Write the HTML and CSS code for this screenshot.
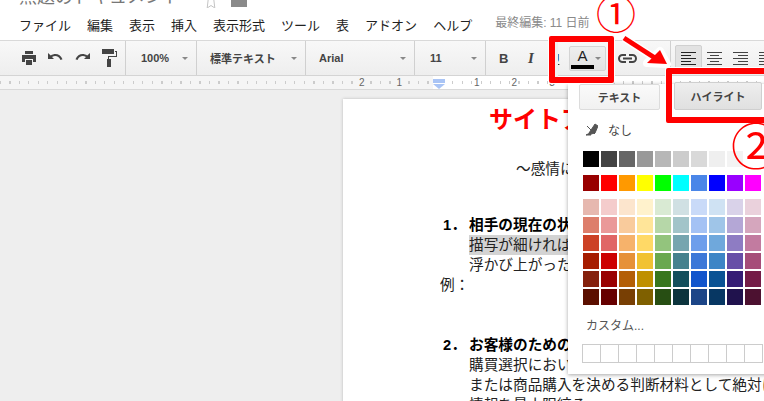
FILE: index.html
```html
<!DOCTYPE html>
<html lang="ja">
    <head>
        <meta charset="UTF-8">
        <meta name="viewport" content="width=device-width, initial-scale=1.0">
        <title>無題のドキュメント</title>
        <link rel="stylesheet" href="styles.css">
    </head>
    <body>
        <div class="header">
            <div class="title-row">
                <span class="doc-title">無題のドキュメント</span>
                <svg class="star" width="12" height="8" viewBox="0 0 12 8"><path d="M3.500 -3 L2.200 8 L6 5.500 L9.800 8 L8.500 -3" fill="none" stroke="#c4c4c4"/></svg>
                <span class="folder"></span>
            </div>
            <div class="menu-row">
                <span class="menu-item">ファイル</span>
                <span class="menu-item">編集</span>
                <span class="menu-item">表示</span>
                <span class="menu-item">挿入</span>
                <span class="menu-item">表示形式</span>
                <span class="menu-item">ツール</span>
                <span class="menu-item">表</span>
                <span class="menu-item">アドオン</span>
                <span class="menu-item">ヘルプ</span>
                <span class="last-edit">最終編集: 11 日前</span>
            </div>
        </div>

        <div class="toolbar">
            <div class="group group-icons">
                <svg width="14" height="14" viewBox="0 0 14 14"><path d="M3 0h8v3H3z M0 4h14v7h-3V8H3v3H0z M4 9h6v5H4z" fill="#444"/></svg>
                <svg width="15" height="14" viewBox="0 0 15 14"><path d="M0 2v6h6L4 6c3-2 7-1 8.500 3l2-.7C12.500 3 7 1.500 2.800 4.500z" fill="#444"/></svg>
                <svg width="15" height="14" viewBox="0 0 15 14"><path d="M15 2v6H9l2-2C8 4 4 5 2.500 9l-2-.7C2.500 3 8 1.500 12.200 4.500z" fill="#444"/></svg>
                <svg width="15" height="18" viewBox="0 0 15 18"><path d="M0 0h12v5H0z M13 2h2v6H7v2h2v8H5v-8h1V7h8V3h-1z" fill="#444"/></svg>
            </div>
            <div class="group group-zoom"><span class="label">100%</span><span class="caret"></span></div>
            <div class="group group-style"><span class="label">標準テキスト</span><span class="caret"></span></div>
            <div class="group group-font"><span class="label">Arial</span><span class="caret"></span></div>
            <div class="group group-size"><span class="label">11</span><span class="caret"></span></div>
            <div class="group group-format">
                <span class="fmt fmt-b">B</span>
                <span class="fmt fmt-i">I</span>
                <span class="fmt fmt-u">U</span>
                <div class="color-btn">
                    <span class="color-letter">A</span>
                    <span class="caret"></span>
                </div>
                <svg class="link-icon" width="19" height="9" viewBox="0 0 19 9"><path d="M8 1H4.500a3.500 3.500 0 0 0 0 7H8 M11 1h3.500a3.500 3.500 0 0 1 0 7H11 M5 4.500h9" fill="none" stroke="#444" stroke-width="2"/></svg>
            </div>
            <div class="group group-align">
                <span class="align-btn active"><svg width="15" height="13" viewBox="0 0 15 13"><path d="M0 .5h15M0 3.500h10M0 6.500h15M0 9.500h10M0 12.500h15" stroke="#222"/></svg></span>
                <span class="align-btn"><svg width="15" height="13" viewBox="0 0 15 13"><path d="M0 .5h15M3 3.500h9M0 6.500h15M3 9.500h9M0 12.500h15" stroke="#444"/></svg></span>
                <span class="align-btn"><svg width="15" height="13" viewBox="0 0 15 13"><path d="M0 .5h15M5 3.500h10M0 6.500h15M5 9.500h10M0 12.500h15" stroke="#444"/></svg></span>
                <span class="align-btn"><svg width="15" height="13" viewBox="0 0 15 13"><path d="M0 .5h15M0 3.500h15M0 6.500h15M0 9.500h15M0 12.500h15" stroke="#444"/></svg></span>
            </div>
        </div>

        <div class="ruler">
            <div class="ruler-margin">
                <span class="tick-num">2</span>
                <span class="tick-num">1</span>
            </div>
            <div class="ruler-page">
                <span class="indent"></span>
                <span class="tick-num">1</span>
                <span class="tick-num">2</span>
                <span class="tick-num">3</span>
            </div>
        </div>

        <div class="canvas">
            <div class="paper">
                <h1 class="doc-heading">サイトアフィリエイト</h1>
                <p class="doc-sub">〜感情に訴える文章術〜</p>

                <div class="item item-first">
                    <span class="num">1．</span>
                    <div class="item-body">
                        <p class="item-head">相手の現在の状況を描写する</p>
                        <p><span class="hl">描写が細ければ細かいほど</span></p>
                        <p>浮かび上がった悩みに共感します</p>
                    </div>
                </div>
                <p class="example">例：</p>

                <div class="item item-second">
                    <span class="num">2．</span>
                    <div class="item-body">
                        <p class="item-head">お客様のための情報を提供する</p>
                        <p>購買選択において必要な情報を</p>
                        <p>または商品購入を決める判断材料として絶対に</p>
                        <p>情報を最小限絞る</p>
                    </div>
                </div>
            </div>
        </div>

        <div class="color-menu">
            <div class="tabs">
                <span class="tab">テキスト</span>
                <span class="tab tab-on">ハイライト</span>
            </div>
            <div class="none-row">
                <svg width="12" height="13" viewBox="0 0 12 13"><path d="M3 10 L9 1 L12 3 L9 10 L5 11 Z M0 12 L4 10 L5 12 Z M1 3 L9 11" fill="#555" stroke="#555"/></svg>
                <span>なし</span>
            </div>
            <div class="swatches row-gray">
                <i style="background:#000000"></i><i style="background:#434343"></i><i style="background:#666666"></i><i style="background:#999999"></i><i style="background:#b7b7b7"></i><i style="background:#cccccc"></i><i style="background:#d9d9d9"></i><i style="background:#efefef"></i><i style="background:#f3f3f3"></i><i style="background:#ffffff"></i>
            </div>
            <div class="swatches row-bright">
                <i style="background:#980000"></i><i style="background:#ff0000"></i><i style="background:#ff9900"></i><i style="background:#ffff00"></i><i style="background:#00ff00"></i><i style="background:#00ffff"></i><i style="background:#4a86e8"></i><i style="background:#0000ff"></i><i style="background:#9900ff"></i><i style="background:#ff00ff"></i>
            </div>
            <div class="swatches row-shades">
                <i style="background:#e6b8af"></i><i style="background:#f4cccc"></i><i style="background:#fce5cd"></i><i style="background:#fff2cc"></i><i style="background:#d9ead3"></i><i style="background:#d0e0e3"></i><i style="background:#c9daf8"></i><i style="background:#cfe2f3"></i><i style="background:#d9d2e9"></i><i style="background:#ead1dc"></i>
                <i style="background:#dd7e6b"></i><i style="background:#ea9999"></i><i style="background:#f9cb9c"></i><i style="background:#ffe599"></i><i style="background:#b6d7a8"></i><i style="background:#a2c4c9"></i><i style="background:#a4c2f4"></i><i style="background:#9fc5e8"></i><i style="background:#b4a7d6"></i><i style="background:#d5a6bd"></i>
                <i style="background:#cc4125"></i><i style="background:#e06666"></i><i style="background:#f6b26b"></i><i style="background:#ffd966"></i><i style="background:#93c47d"></i><i style="background:#76a5af"></i><i style="background:#6d9eeb"></i><i style="background:#6fa8dc"></i><i style="background:#8e7cc3"></i><i style="background:#c27ba0"></i>
                <i style="background:#a61c00"></i><i style="background:#cc0000"></i><i style="background:#e69138"></i><i style="background:#f1c232"></i><i style="background:#6aa84f"></i><i style="background:#45818e"></i><i style="background:#3c78d8"></i><i style="background:#3d85c6"></i><i style="background:#674ea7"></i><i style="background:#a64d79"></i>
                <i style="background:#85200c"></i><i style="background:#990000"></i><i style="background:#b45f06"></i><i style="background:#bf9000"></i><i style="background:#38761d"></i><i style="background:#134f5c"></i><i style="background:#1155cc"></i><i style="background:#0b5394"></i><i style="background:#351c75"></i><i style="background:#741b47"></i>
                <i style="background:#5b0f00"></i><i style="background:#660000"></i><i style="background:#783f04"></i><i style="background:#7f6000"></i><i style="background:#274e13"></i><i style="background:#0c343d"></i><i style="background:#1c4587"></i><i style="background:#073763"></i><i style="background:#20124d"></i><i style="background:#4c1130"></i>
            </div>
            <div class="custom-label">カスタム...</div>
            <div class="custom-row">
                <i></i><i></i><i></i><i></i><i></i><i></i><i></i><i></i><i></i><i></i>
            </div>
        </div>

        <!-- red annotations drawn on top of the screenshot -->
        <div class="mark mark-color"></div>
        <div class="mark mark-tab"></div>
        <svg class="arrow" width="52" height="36" viewBox="0 0 52 36">
            <path d="M3 3 L32 22 M39 16 L46 29 L26 28 Z" fill="#fff" stroke="#fff" stroke-width="8" stroke-linejoin="round"/>
            <path d="M3 3 L34 23" stroke="#f00" stroke-width="5"/>
            <path d="M39 15 L46 29 L26 28 Z" fill="#f00"/>
        </svg>
        <span class="circled circled-one">①</span>
        <span class="circled circled-two">②</span>
    </body>
</html>
```

FILE: styles.css
```css
*{
    box-sizing: border-box;
    font-family: "Liberation Sans", "Noto Sans CJK JP", sans-serif;
}

html, body{
    margin: 0;
    height: 401px;
    overflow: hidden;
    background-color: white;
}

p, h1{
    margin: 0;
}

.header{
    height: 40px;
    padding-left: 19px;
    overflow: hidden;
}

.title-row{
    height: 8px;
    display: flex;
    align-items: flex-end;
}

.doc-title{
    font-size: 18px;
    line-height: 22px;
    color: #777;
    width: 186px;
    flex: none;
}

.star{
    flex: none;
}

.folder{
    width: 16px;
    height: 7px;
    margin: 0 0 1px 14px;
    background-color: #8a8a8a;
    flex: none;
}

.menu-row{
    display: flex;
    align-items: center;
    height: 20px;
    margin-top: 6px;
    font-size: 13px;
    color: #222;
}

.menu-item{
    margin-right: 16px;
    white-space: nowrap;
}

.last-edit{
    margin: 0 0 5px 7px;
    font-size: 12px;
    color: #8a8a8a;
    white-space: nowrap;
}

.toolbar{
    height: 36px;
    display: flex;
    border-top: 1px solid #d9d9d9;
    border-bottom: 1px solid #d4d4d4;
    background: linear-gradient(#f8f8f8, #eeeeee);
}

.group{
    display: flex;
    align-items: center;
    flex: none;
    height: 100%;
    border-right: 1px solid #d0d0d0;
}

.group-icons{
    width: 126px;
    padding-left: 22px;
    gap: 12px;
}

.group-zoom{
    width: 71px;
    padding-left: 15px;
}

.group-style{
    width: 109px;
    padding-left: 13px;
}

.group-font{
    width: 109px;
    padding-left: 13px;
}

.group-size{
    width: 71px;
    padding-left: 15px;
}

.group-format{
    width: 185px;
    padding-left: 13px;
}

.group-align{
    padding-left: 4px;
    border-right: none;
}

.label{
    font-size: 11px;
    font-weight: bold;
    color: #444;
    white-space: nowrap;
    flex: 1;
}

.caret{
    width: 0;
    height: 0;
    margin-right: 8px;
    border-left: 3px solid transparent;
    border-right: 3px solid transparent;
    border-top: 3px solid #888;
    flex: none;
}

.fmt{
    font-size: 13px;
    font-weight: bold;
    color: #444;
    width: 29px;
    flex: none;
}

.fmt-i{
    width: 22px;
    font-style: italic;
    font-family: "Liberation Serif", serif;
    font-size: 15px;
}

.fmt-u{
    width: 19px;
    text-decoration: underline;
    color: #333;
}

.color-btn{
    position: relative;
    width: 37px;
    height: 25px;
    display: flex;
    align-items: center;
    justify-content: flex-end;
    flex: none;
    background: linear-gradient(#eeeeee, #e2e2e2);
    border: 1px solid #d4d4d4;
    border-radius: 2px;
}

.color-btn .caret{
    margin-right: 4px;
}

.color-letter{
    position: absolute;
    left: 1px;
    bottom: 1px;
    width: 23px;
    height: 22px;
    border-bottom: 4px solid black;
    font-size: 15px;
    line-height: 18px;
    text-align: center;
    color: #222;
}

.link-icon{
    margin-left: 12px;
}

.align-btn{
    width: 26px;
    height: 27px;
    display: flex;
    align-items: center;
    justify-content: center;
    flex: none;
    border: 1px solid transparent;
    border-radius: 2px;
}

.align-btn.active{
    width: 27px;
    margin-right: -1px;
    background-color: #e2e2e2;
    border-color: #d0d0d0;
}

.ruler{
    height: 14px;
    display: flex;
    border-bottom: 1px solid #d9d9d9;
    font-size: 10px;
    line-height: 13px;
    color: #666;
}

.ruler-margin, .ruler-page{
    display: flex;
    background-image: repeating-linear-gradient(90deg, #ccc 0 1px, transparent 1px 9.500px);
    background-size: 100% 3px;
    background-repeat: no-repeat;
    background-position: 0 5px;
}

.ruler-margin{
    width: 433px;
    padding-left: 358px;
    background-color: #f5f5f5;
    flex: none;
}

.ruler-page{
    flex: 1;
    background-color: white;
}

.tick-num{
    background-color: inherit;
    padding: 0 1px;
    flex: none;
}

.ruler-margin .tick-num + .tick-num{
    margin-left: 30px;
}

.ruler-page .tick-num{
    margin-left: 30px;
}

.ruler-page .indent + .tick-num{
    margin-left: 28px;
}

.indent{
    width: 12px;
    height: 10px;
    margin-top: 3px;
    background: linear-gradient(#a9c4f5 0 4px, white 4px 5px, #a9c4f5 5px);
    clip-path: polygon(0 0, 100% 0, 100% 50%, 50% 100%, 0 50%);
    flex: none;
}

.canvas{
    height: 311px;
    padding: 9px 0 0 343px;
    background-color: #eeeeee;
    overflow: hidden;
}

.paper{
    width: 600px;
    height: 400px;
    padding-left: 97px;
    background-color: white;
    box-shadow: 0 0 3px #bbb;
    font-size: 14.67px;
    line-height: 20px;
    color: #222;
}

.doc-heading{
    padding: 4px 0 0 49px;
    font-size: 24px;
    line-height: 34px;
    font-weight: bold;
    color: #ff0000;
    white-space: nowrap;
}

.doc-sub{
    padding: 22px 0 0 76px;
    white-space: nowrap;
}

.item{
    display: flex;
    white-space: nowrap;
}

.item-first{
    margin-top: 36px;
}

.item-second{
    margin-top: 40px;
}

.num{
    width: 29px;
    padding-left: 3px;
    font-weight: bold;
    color: black;
    flex: none;
}

.item-head{
    font-weight: bold;
    color: black;
}

.hl{
    display: inline-block;
    height: 20px;
    background-color: #d3d3d3;
}

.color-menu{
    position: absolute;
    left: 568px;
    top: 84px;
    width: 210px;
    height: 290px;
    padding-left: 15px;
    background-color: white;
    box-shadow: 0 1px 4px rgba(0, 0, 0, 0.35);
}

.tabs{
    display: flex;
    align-items: flex-end;
    gap: 14px;
    margin-left: -4px;
    height: 26px;
}

.tab{
    width: 81px;
    height: 26px;
    display: flex;
    align-items: center;
    justify-content: center;
    font-size: 11px;
    font-weight: bold;
    color: #444;
    background: linear-gradient(#fafafa, #f1f1f1);
    border: 1px solid #dcdcdc;
    border-radius: 2px;
    flex: none;
}

.tab-on{
    width: 88px;
    height: 28px;
    background: linear-gradient(#eeeeee, #e0e0e0);
    border-color: #cfcfcf;
}

.none-row{
    display: flex;
    align-items: center;
    gap: 10px;
    height: 20px;
    margin: 9px 0 12px 3px;
    font-size: 12px;
    color: #444;
}

.swatches{
    display: grid;
    grid-template-columns: repeat(10, 16px);
    grid-auto-rows: 16px;
    gap: 2px;
}

.swatches i, .custom-row i{
    display: block;
}

.row-bright, .row-shades{
    margin-top: 8px;
}

.custom-label{
    margin: 12px 0 9px 3px;
    height: 18px;
    font-size: 12px;
    line-height: 18px;
    color: #555;
}

.custom-row{
    display: grid;
    grid-template-columns: repeat(10, 18px);
    height: 19px;
    margin-left: -1px;
}

.custom-row i{
    height: 19px;
    border: 1px solid #cccccc;
    margin-right: -1px;
}

.mark{
    position: absolute;
    border: 6px solid #f00;
    border-radius: 2px;
    box-shadow: 0 0 0 1px white;
}

/* hides the left half of the underline button, as the pasted box does */
.mark-color::before{
    content: "";
    position: absolute;
    left: 0;
    top: 0;
    width: 3px;
    height: 100%;
    background-color: #f0f0f0;
}

.mark-color{
    left: 549px;
    top: 36px;
    width: 65px;
    height: 47px;
}

.mark-tab{
    left: 666px;
    top: 68px;
    width: 110px;
    height: 55px;
}

.arrow{
    position: absolute;
    left: 621px;
    top: 35px;
}

.circled{
    position: absolute;
    font-family: "Liberation Serif", "Noto Sans CJK JP", serif;
    color: #f00;
    line-height: 1;
}

.circled-one{
    left: 596px;
    top: -4px;
    font-size: 40px;
}

.circled-two{
    left: 731px;
    top: 123px;
    font-size: 50px;
}
```
